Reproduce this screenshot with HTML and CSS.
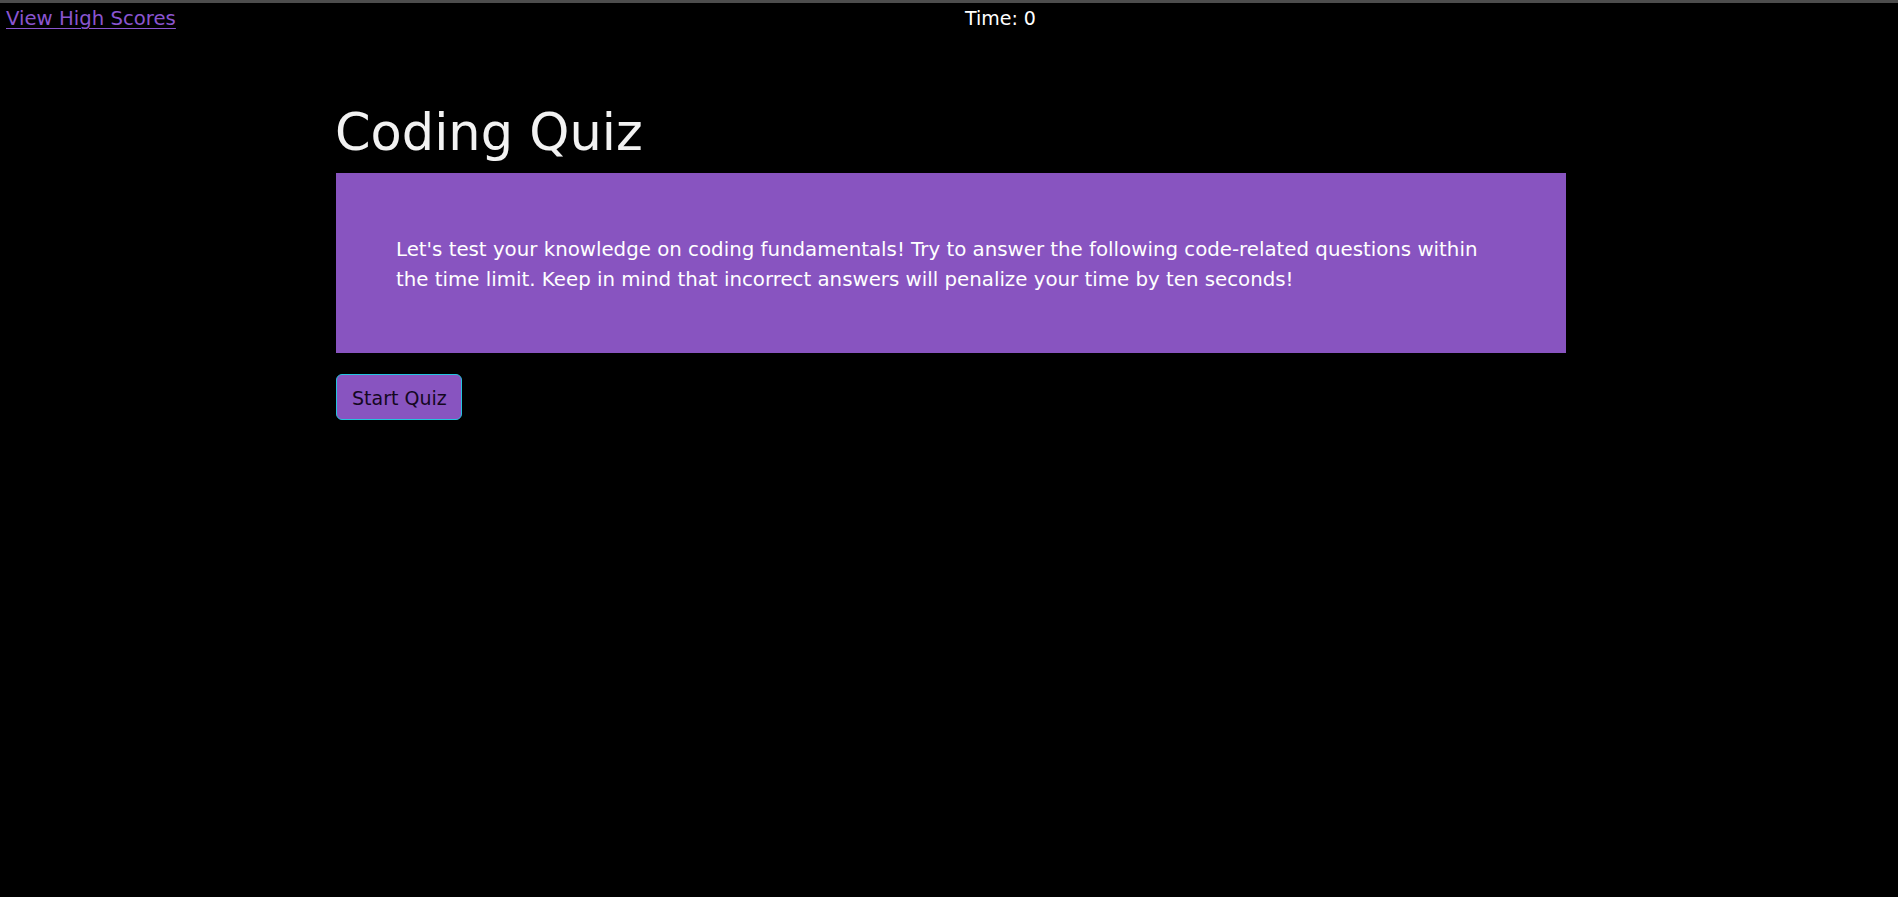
FILE: index.html
```html
<!DOCTYPE html>
<html lang="en">
<head>
<meta charset="utf-8">
<title>Coding Quiz</title>
<link rel="stylesheet" href="styles.css">
</head>
<body>
<header class="topbar">
  <a class="scores-link" href="#">View High Scores</a>
  <span class="timer">Time: 0</span>
</header>
<main class="quiz">
  <h1 class="quiz-title">Coding Quiz</h1>
  <div class="intro-card">
    <p class="intro-text">Let's test your knowledge on coding fundamentals! Try to answer the following code-related questions within the time limit. Keep in mind that incorrect answers will penalize your time by ten seconds!</p>
  </div>
  <button class="start-btn" type="button">Start Quiz</button>
</main>
</body>
</html>
```
FILE: styles.css
```css
html, body {
  margin: 0;
  padding: 0;
  background: #000;
}
body {
  border-top: 3px solid #4d4d4d;
  min-height: 894px;
  font-family: "DejaVu Sans", sans-serif;
  color: #fff;
}
.topbar {
  display: flex;
  align-items: baseline;
  padding-left: 6px;
  height: 30px;
  line-height: 30px;
  font-size: 19.7px;
}
.scores-link {
  color: #8a55d0;
  text-decoration: underline;
  text-underline-offset: 3px;
  text-decoration-thickness: 1px;
}
.timer {
  margin-left: 789px;
  font-size: 19px;
  color: #fff;
}
.quiz {
  padding: 0 332px 0 336px;
}
.quiz-title {
  margin: 70px 0 10px -1px;
  font-size: 51px;
  line-height: 60px;
  font-weight: normal;
  color: #f2f2f2;
}
.intro-card {
  background: #8854c0;
  padding: 62px 60px 58px;
}
.intro-text {
  margin: 0;
  font-size: 19.8px;
  line-height: 30px;
  color: #fff;
}
.start-btn {
  margin-top: 21px;
  display: inline-block;
  background: #8854c0;
  border: 1px solid #25c3de;
  border-radius: 6px;
  padding: 11px 14px 9px 15px;
  font-family: "DejaVu Sans", sans-serif;
  font-size: 19px;
  line-height: 24px;
  color: #14081f;
  cursor: pointer;
}
```
